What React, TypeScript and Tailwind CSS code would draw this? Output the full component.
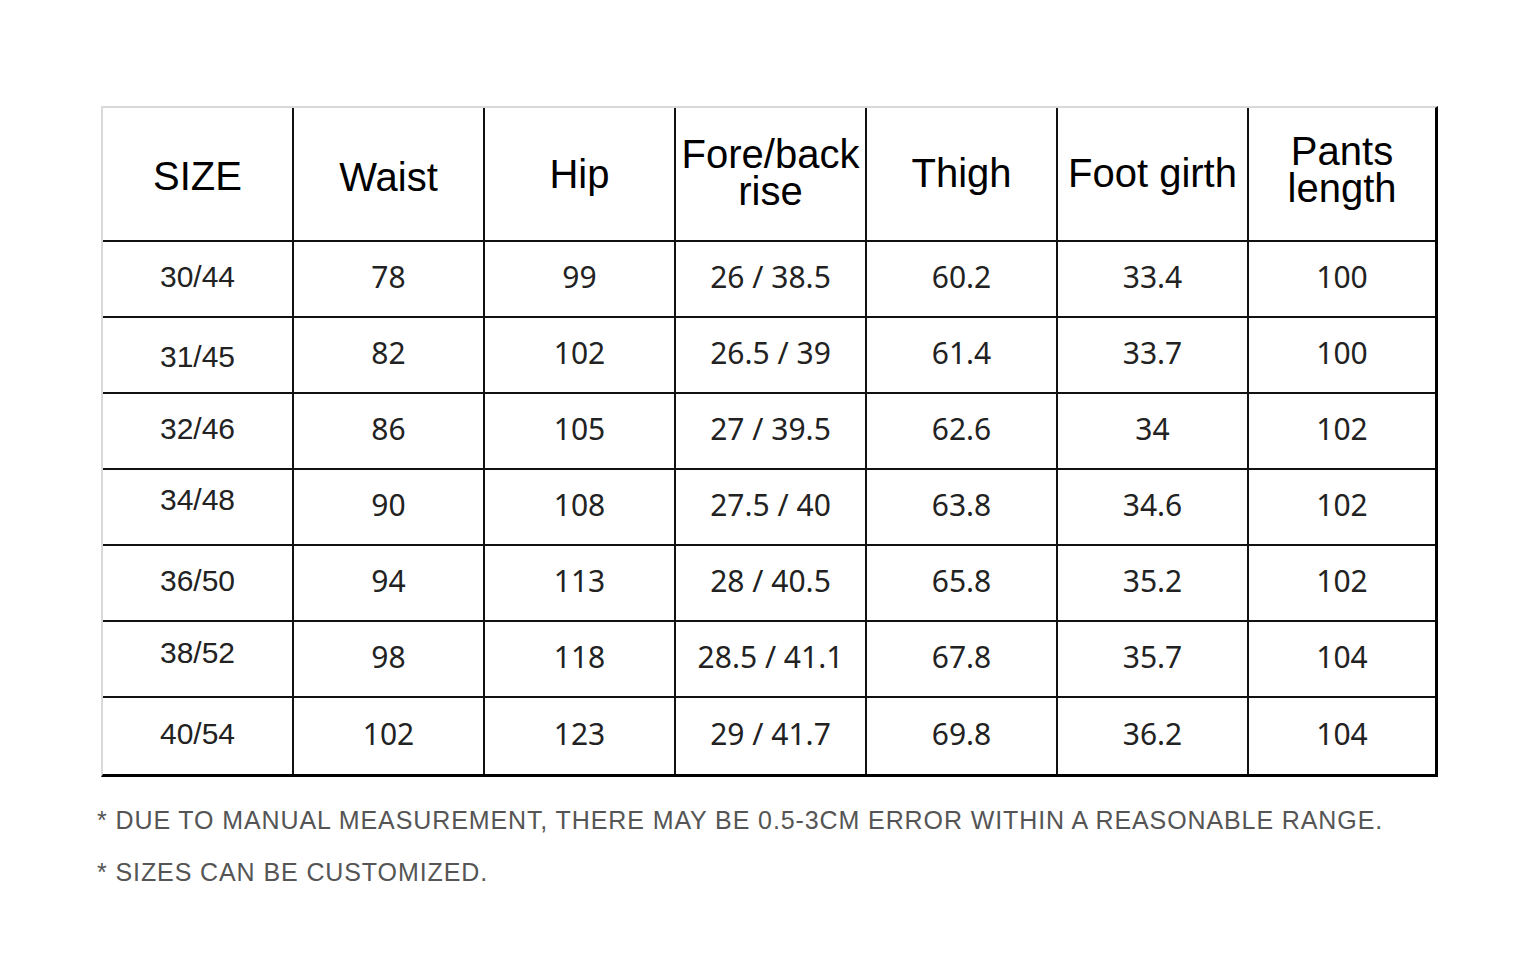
import React from "react";

const headers: { lines: string[]; cls: string }[] = [
  { lines: ["SIZE"], cls: "pt-[4px]" },
  { lines: ["Waist"], cls: "pt-[6px]" },
  { lines: ["Hip"], cls: "" },
  { lines: ["Fore/back", "rise"], cls: "pb-[2px]" },
  { lines: ["Thigh"], cls: "pb-[2px]" },
  { lines: ["Foot girth"], cls: "pb-[2px]" },
  { lines: ["Pants", "length"], cls: "pb-[8px]" },
];

const rows: string[][] = [
  ["30/44", "78", "99", "26 / 38.5", "60.2", "33.4", "100"],
  ["31/45", "82", "102", "26.5 / 39", "61.4", "33.7", "100"],
  ["32/46", "86", "105", "27 / 39.5", "62.6", "34", "102"],
  ["34/48", "90", "108", "27.5 / 40", "63.8", "34.6", "102"],
  ["36/50", "94", "113", "28 / 40.5", "65.8", "35.2", "102"],
  ["38/52", "98", "118", "28.5 / 41.1", "67.8", "35.7", "104"],
  ["40/54", "102", "123", "29 / 41.7", "69.8", "36.2", "104"],
];

const sizeOffsets = ["pb-[6px]", "pt-[2px]", "pb-[6px]", "pb-[16px]", "pb-[6px]", "pb-[14px]", "pb-[6px]"];

export default function App() {
  return (
    <div className="w-[1536px] h-[968px] bg-white overflow-hidden">
      <div className="pt-[106px] pl-[101px]">
        <div className="w-[1337px] border-t-2 border-l-2 border-t-[#d9d9d9] border-l-[#d9d9d9] border-r-[3px] border-b-[3px] border-r-black border-b-black">
          <div className="grid grid-cols-[repeat(6,191px)_1fr]">
            {headers.map((h, i) => (
              <div
                key={i}
                className={`h-[134px] flex flex-col items-center justify-center border-b-2 border-b-[#111] ${
                  i < 6 ? "border-r-2 border-r-[#111]" : ""
                } text-[40px] leading-[37px] text-black font-['Liberation_Sans',Arial,sans-serif] ${h.cls}`}
              >
                {h.lines.map((l, j) => (
                  <span key={j} className="whitespace-nowrap">
                    {l}
                  </span>
                ))}
              </div>
            ))}
            {rows.map((r, ri) =>
              r.map((c, ci) => (
                <div
                  key={`${ri}-${ci}`}
                  className={`h-[76px] flex items-center justify-center ${
                    ri < rows.length - 1 ? "border-b-2 border-b-[#111]" : ""
                  } ${ci < 6 ? "border-r-2 border-r-[#111]" : ""} ${
                    ci === 0
                      ? `text-[30px] text-[#222] font-['Liberation_Sans',Arial,sans-serif] ${sizeOffsets[ri]}`
                      : "text-[30px] text-[#222] font-['Noto_Sans','Open_Sans',sans-serif] pb-[6px]"
                  }`}
                >
                  <span className="whitespace-nowrap">{c}</span>
                </div>
              ))
            )}
          </div>
        </div>
      </div>
      <div className="pl-[97px] pt-[30px] text-[25px] leading-[26px] text-[#555] font-['Liberation_Sans',Arial,sans-serif] tracking-[0.9px]">
        <p className="whitespace-nowrap">* DUE TO MANUAL MEASUREMENT, THERE MAY BE 0.5-3CM ERROR WITHIN A REASONABLE RANGE.</p>
        <p className="mt-[26px] whitespace-nowrap">* SIZES CAN BE CUSTOMIZED.</p>
      </div>
    </div>
  );
}
